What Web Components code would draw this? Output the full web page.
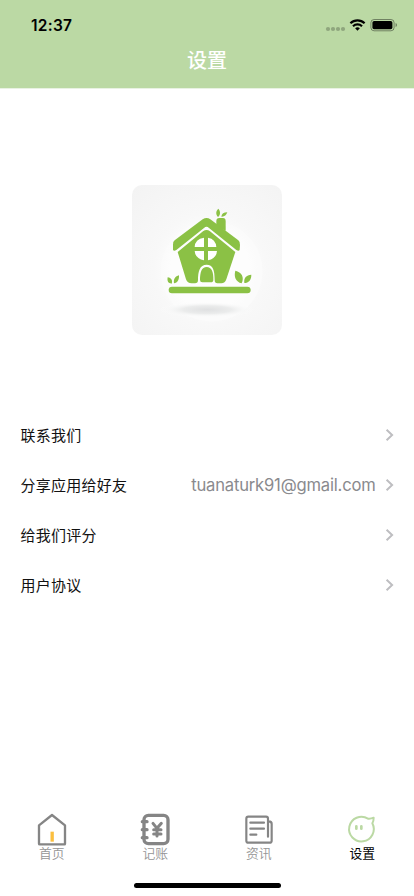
<!DOCTYPE html>
<html lang="zh-CN">
<head>
<meta charset="utf-8">
<meta name="viewport" content="width=device-width, initial-scale=1">
<title>设置</title>
<style>
html,body{margin:0;height:100%;background:#fff}
body{font-family:Inter,"Noto Sans CJK SC",sans-serif;overflow:hidden}
</style>
</head>
<body>
<settings-page></settings-page>
<script>
const define = (name, html) => customElements.define(name, class extends HTMLElement {
  constructor() {
    super();
    const t = document.createElement('template');
    t.innerHTML = html;
    this.attachShadow({ mode: 'open' }).append(t.content.cloneNode(true));
  }
});

define('status-bar', `
<style>
:host{display:flex;justify-content:space-between;height:44px;color:#000}
.time{margin:16px 0 0 31px;font:600 15.5px/19px Inter,sans-serif;letter-spacing:.25px}
svg{display:block;width:76px;height:20px;margin:15px 15px 0 0}
</style>
<span class="time">12:37</span>
<svg viewBox="0 0 76 20">
  <g fill="#000" opacity=".23"><circle cx="5" cy="14" r="2.1"/><circle cx="10" cy="14" r="2.1"/><circle cx="15" cy="14" r="2.1"/><circle cx="20" cy="14" r="2.1"/></g>
  <g fill="none" stroke="#000" stroke-width="2.2"><path d="M27.4 8.2a10.3 10.3 0 0 1 14.2 0"/><path d="M30 11.2a6.6 6.6 0 0 1 9 0"/></g>
  <path d="M34.5 15.7l-2.4-2.5a3.6 3.6 0 0 1 4.8 0z"/>
  <rect x="47.9" y="4.5" width="23.2" height="11.3" rx="3.2" fill="none" stroke="#000" stroke-opacity=".4"/>
  <rect x="49.4" y="6" width="20" height="8.3" rx="1.7"/>
  <path d="M72.6 8.1v4c1.8-.6 1.8-3.4 0-4z" opacity=".45"/>
</svg>`);

define('nav-header', `
<style>
:host{display:block;height:88px;background:#bbd9a4;border-bottom:1px solid #e9f2e3;box-sizing:content-box}
h1{margin:0;height:32px;font:500 20px/31px "Noto Sans CJK SC",sans-serif;color:#fff;text-align:center}
</style>
<status-bar></status-bar><h1><slot></slot></h1>`);

define('app-logo', `
<style>
:host{display:block;width:150px;height:150px;border-radius:10px;overflow:hidden}
svg{display:block;width:100%;height:100%}
</style>
<svg viewBox="21 21 450 450">
  <defs>
    <radialGradient id="bg" cx=".52" cy=".56" r=".75"><stop offset="0" stop-color="#fff"/><stop offset=".35" stop-color="#fcfcfc"/><stop offset=".5" stop-color="#f8f8f8"/><stop offset="1" stop-color="#f3f3f3"/></radialGradient>
    <radialGradient id="sh"><stop offset="0" stop-color="#dfe0e1"/><stop offset=".5" stop-color="#ebecec"/><stop offset="1" stop-color="#fff" stop-opacity="0"/></radialGradient>
  </defs>
  <path fill="url(#bg)" d="M21 21h450v450H21z"/>
  <ellipse cx="260" cy="280" rx="153" ry="151" fill="#fff" opacity=".3"/>
  <ellipse cx="246" cy="395" rx="145" ry="24" fill="url(#sh)"/>
  <g fill="#8bc145">
    <path d="M274 145v-16q0-9 9-9h11q8 0 8 9v29z"/>
    <path d="M279 117c-7-8-7-18 1-25 7 8 7 18-1 25zM289 116c1-9 7-13 18-13-3 9-9 14-18 13z"/>
    <path d="M144 201q-2-9 5-14l84-63q12-8 23 0l84 63q6 5 5 14l-1 15q-3 5-10 0l-82-66q-7-7-15 0l-83 66q-7 5-10 0z"/>
    <path d="M158 222L234 160q11-8 21 0l76 62-27 82q-4 12-15 12h-12q-8 0-8-10c0-29-5-46-24-46-21 0-26 20-26 46q0 10-9 10h-10q-13 0-17-12z"/>
    <path d="M225 306c0-23 5-39 20-39s21 16 20 39q0 7-8 7h-25q-7 0-7-7z"/>
    <rect x="131" y="326" width="246" height="20" rx="10"/>
    <path d="M140 317c-11-1-14-8-12-19 11 2 16 10 12 19zM147 316c-2-13 4-21 15-24 1 13-4 23-15 24zM350 316c-18-5-24-20-19-38 19 4 28 20 19 38zM358 315c-2-16 6-24 21-25 0 16-8 25-21 25z"/>
  </g>
  <g fill="#fff">
    <path d="M237 179v28h-28q1-24 28-28zM249 179v28h25q-2-24-25-28zM237 219v28q-26-5-28-28zM249 219v28q25-5 27-28z"/>
  </g>
</svg>`);

define('settings-row', `
<style>
:host{display:flex;align-items:center;height:50px;padding:0 20px 0 20.5px;color:#111}
.label{flex:1;font:400 15px/24px "Noto Sans CJK SC",sans-serif;letter-spacing:.25px}
::slotted([slot=value]){font:400 16.6px/24px Inter,sans-serif;color:#8a8a8e;letter-spacing:-.2px}
svg{width:9px;height:14px;margin-left:9.500px}
</style>
<span class="label"><slot></slot></span><slot name="value"></slot>
<svg viewBox="0 0 9 14"><path d="M1.6 1.7L7.1 7l-5.5 5.3" fill="none" stroke="#bebec1" stroke-width="2"/></svg>`);

define('tab-item', `
<style>
:host{display:flex;flex:1;flex-direction:column;align-items:center;color:#959595}
:host([active]){color:#000}
::slotted(svg){display:block;width:32px;height:34px}
.label{font:350 12.8px/14px "Noto Sans CJK SC",sans-serif}
:host([active]) .label{font-weight:400}
</style>
<slot name="icon"></slot><span class="label"><slot></slot></span>`);

define('tab-bar', `
<style>
:host{display:flex}
</style><slot></slot>`);

define('settings-page', `
<style>
:host{display:flex;flex-direction:column;height:896px;width:414px;background:#fff}
.logo{display:flex;justify-content:center;padding:96px 0 75px}
.list{flex:1}
tab-bar{height:70.500px}
.home{width:147px;height:5.500px;border-radius:3px;background:#000;margin:0 auto 8px}
</style>
<nav-header>设置</nav-header>
<div class="logo"><app-logo></app-logo></div>
<div class="list">
  <settings-row>联系我们</settings-row>
  <settings-row>分享应用给好友<span slot="value">tuanaturk91@gmail.com</span></settings-row>
  <settings-row>给我们评分</settings-row>
  <settings-row>用户协议</settings-row>
</div>
<tab-bar>
  <tab-item><svg slot="icon" viewBox="108 36 96 102" fill="none" stroke="#858585" stroke-width="7" stroke-linejoin="round"><path d="M156 45l39 31v55q0 2-2 2h-73q-3 0-3-2V76z"/><path d="M156.500 95v30" stroke="#fbbf3f" stroke-width="10"/></svg>首页</tab-item>
  <tab-item><svg slot="icon" viewBox="418 36 96 102" fill="none" stroke="#858585" stroke-width="10" stroke-linecap="round" stroke-linejoin="round"><rect x="433" y="46" width="72" height="85" rx="13"/><path d="M428 65h14M428 89h14M428 113h14" stroke-width="10"/><path d="M460 70l12 15 13-15M472 85v23M462 89h22M462 102h22" stroke-width="9"/></svg>记账</tab-item>
  <tab-item><svg slot="icon" viewBox="108 36 96 102" fill="none" stroke="#858585" stroke-width="6.500" stroke-linecap="round" stroke-linejoin="round"><path d="M183 64V56q0-6-6-6h-53q-6 0-6 6v66q0 6 6 6h64q6 0 6-6V72q0-8-8-8h-3v46"/><path d="M130 68h41M130 86h41M130 104h18"/></svg>资讯</tab-item>
  <tab-item active><svg slot="icon" viewBox="418 36 96 102" fill="none" stroke="#bbd9a4" stroke-width="6" stroke-linecap="round" stroke-linejoin="round"><path d="M484 56a37 37 0 1 0 13 14q4-7 4-17-9 4-17 3z"/><path d="M449 79v7M464 79v7" stroke-width="8"/></svg>设置</tab-item>
</tab-bar>
<div class="home"></div>`);
</script>
</body>
</html>
